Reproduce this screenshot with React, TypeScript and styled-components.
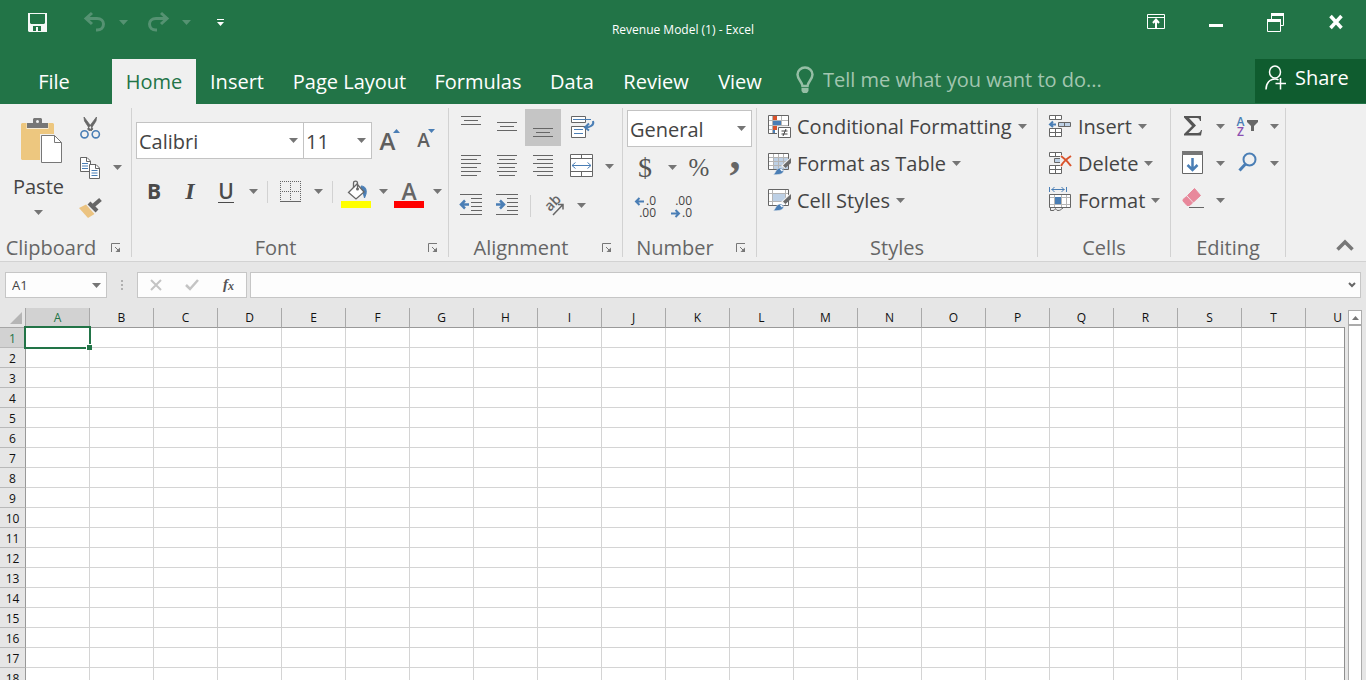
import React from 'react';
import styled, { createGlobalStyle, css } from 'styled-components';

const GREEN = '#227447';
const GRAY = '#666';
const BLUE = '#4a7eb5';
const FONT = '"Open Sans", "Noto Sans", sans-serif';

const GlobalStyle = createGlobalStyle`
  *, *::before, *::after { box-sizing: border-box; }
  body { margin: 0; overflow: hidden; font-family: ${FONT}; background: #e6e6e6; }
  button, input, select { font-family: inherit; font-size: inherit; color: inherit; margin: 0; padding: 0; border: 0; background: none; border-radius: 0; outline: none; }
  button { cursor: pointer; }
  svg { display: block; flex: none; overflow: visible; }
`;

const Window = styled.div`
  display: flex;
  flex-direction: column;
  height: 100vh;
  overflow: hidden;
`;

/* ---------- title bar ---------- */

const TitleBar = styled.header`
  display: grid;
  grid-template-columns: 1fr auto 1fr;
  height: 59px;
  flex: none;
  background: ${GREEN};
  color: #fff;
`;

const QuickAccess = styled.div`
  display: flex;
  gap: 7px;
  height: 44px;
  padding-left: 19px;
`;

const SplitButton = styled.div`
  display: flex;
`;

const DocumentTitle = styled.h1`
  margin: 0;
  font-size: 12px;
  font-weight: 400;
  line-height: 60px;
  white-space: nowrap;
`;

const WindowControls = styled.div`
  display: flex;
  justify-content: flex-end;
  height: 44px;
`;

const TitleButton = styled.button<{ $width: number; $space?: number; $dim?: boolean }>`
  display: flex;
  align-items: center;
  justify-content: center;
  width: ${(p) => p.$width}px;
  margin-right: ${(p) => p.$space ?? 0}px;
  color: ${(p) => (p.$dim ? '#559272' : '#fff')};
`;

/* ---------- tabs ---------- */

const TabBar = styled.nav`
  display: flex;
  height: 45px;
  flex: none;
  background: ${GREEN};
  color: #fff;
  font-size: 20px;
`;

const Tab = styled.button<{ $width: number; $active?: boolean }>`
  width: ${(p) => p.$width}px;
  line-height: 45px;
  white-space: nowrap;
  text-align: center;
  ${(p) =>
    p.$active &&
    css`
      margin-left: 4px;
      background: #f0f0f0;
      color: ${GREEN};
    `}
`;

const TellMe = styled.label`
  display: flex;
  align-items: center;
  flex: 1;
  gap: 8px;
  padding-left: 18px;
  padding-bottom: 4px;
  color: #a2c6b0;

  input {
    flex: 1;
    min-width: 0;
    height: 40px;
  }
  input::placeholder {
    color: #a2c6b0;
    opacity: 1;
  }
`;

const ShareButton = styled.button`
  display: flex;
  align-items: center;
  gap: 8px;
  width: 111px;
  height: 44px;
  padding: 0 0 8px 10px;
  background: #0f5c2f;
  color: #fff;
`;

/* ---------- ribbon ---------- */

const Ribbon = styled.div`
  display: flex;
  height: 158px;
  flex: none;
  padding: 4px 0;
  background: #f0f0f0;
  border-bottom: 1px solid #d2d2d2;
  color: #444;
  font-size: 20px;
`;

const Group = styled.section<{ $width: number }>`
  display: flex;
  flex-direction: column;
  justify-content: space-between;
  flex: none;
  width: ${(p) => p.$width}px;
  border-right: 1px solid #d2d2d2;
`;

const Columns = styled.div`
  display: flex;
`;

const Rows = styled.div<{ $gap: number; $top?: number; $left?: number }>`
  display: flex;
  flex-direction: column;
  gap: ${(p) => p.$gap}px;
  padding-top: ${(p) => p.$top ?? 1}px;
  padding-left: ${(p) => p.$left ?? 4}px;
`;

const Row = styled.div`
  display: flex;
  height: 37px;
`;

const GroupFooter = styled.footer<{ $launcher?: boolean }>`
  display: flex;
  align-items: center;
  gap: 9px;
  padding-right: ${(p) => (p.$launcher ? 10 : 0)}px;
  color: #666;
`;

const GroupTitle = styled.h2`
  flex: 1;
  margin: 0;
  font-size: 20px;
  font-weight: 400;
  line-height: 18px;
  text-align: center;
  white-space: nowrap;
`;

const ToolButton = styled.button<{ $on?: boolean; $space?: number }>`
  display: flex;
  align-items: center;
  justify-content: center;
  width: 36px;
  height: 37px;
  flex: none;
  margin-left: ${(p) => p.$space ?? 0}px;
  background: ${(p) => (p.$on ? '#c5c5c5' : 'none')};
`;

const CaretButton = styled(ToolButton)`
  width: 18px;
`;

const CommandButton = styled.button`
  display: flex;
  align-items: center;
  gap: 6px;
  height: 37px;
  line-height: 37px;
  white-space: nowrap;
`;

const PasteButton = styled.button`
  display: flex;
  flex-direction: column;
  align-items: center;
  width: 72px;
  padding: 10px 0 0 5px;
  line-height: 46px;
`;

const Divider = styled.span`
  width: 1px;
  height: 22px;
  margin: 8px 5px;
  background: #d2d2d2;
`;

const SelectBox = styled.span<{ $width: number }>`
  display: grid;
  align-items: center;
  width: ${(p) => p.$width}px;
  height: 37px;
  border: 1px solid #c3c3c3;
  background: #fff;

  & + & { border-left: 0; }
  select {
    grid-area: 1 / 1;
    width: 100%;
    height: 35px;
    padding: 1px 0 0 2px;
    appearance: none;
  }
  svg {
    grid-area: 1 / 1;
    justify-self: end;
    margin-right: 5px;
    pointer-events: none;
  }
`;

const CollapseButton = styled.button`
  display: flex;
  align-items: flex-end;
  margin-left: auto;
  padding: 0 12px 6px;
`;

/* ---------- formula bar ---------- */

const FormulaBar = styled.div`
  display: flex;
  align-items: center;
  height: 46px;
  flex: none;
  padding: 0 5px;
  font-size: 13px;
  color: #444;
`;

const Box = styled.div<{ $width?: number }>`
  display: flex;
  align-items: center;
  ${(p) => (p.$width ? `width: ${p.$width}px;` : 'flex: 1; margin-left: 3px;')}
  height: 26px;
  border: 1px solid #c6c6c6;
  background: #fdfdfd;

  input {
    flex: 1;
    min-width: 0;
    height: 24px;
    padding-left: 6px;
  }
`;

const BoxButton = styled.button<{ $width: number }>`
  display: flex;
  align-items: center;
  justify-content: center;
  width: ${(p) => p.$width}px;
  height: 24px;
`;

const Grip = styled.span`
  display: flex;
  flex-direction: column;
  align-items: center;
  gap: 2px;
  width: 30px;

  i { width: 2px; height: 2px; background: #b0b0b0; }
`;

/* ---------- sheet ---------- */

const SheetArea = styled.main`
  display: flex;
  flex: 1;
  min-height: 0;
`;

const SheetView = styled.div`
  flex: 1;
  min-width: 0;
  overflow: hidden;
`;

const Sheet = styled.table`
  table-layout: fixed;
  width: max-content;
  border-collapse: separate;
  border-spacing: 0;
  font-size: 12px;
  color: #111;
`;

const Corner = styled.td`
  width: 26px;
  height: 20px;
  padding: 0 3px 0 0;
  border-right: 1px solid #a6a6a6;
  border-bottom: 1px solid #a6a6a6;

  svg { margin-left: auto; }
`;

const headerState = css<{ $active?: boolean }>`
  font-weight: 400;
  color: ${(p) => (p.$active ? GREEN : '#111')};
  background: ${(p) => (p.$active ? '#d2d2d2' : '#e6e6e6')};
`;

const ColumnHeader = styled.th<{ $active?: boolean }>`
  width: 64px;
  height: 20px;
  padding: 0;
  line-height: 19px;
  border-right: 1px solid #a9a9a9;
  border-bottom: 1px solid #999;
  ${headerState}
`;

const RowHeader = styled.th<{ $active?: boolean }>`
  width: 26px;
  height: 20px;
  padding: 2px 0 0;
  line-height: 17px;
  border-right: 1px solid #999;
  border-bottom: 1px solid #b9b9b9;
  ${headerState}
`;

const Cell = styled.td<{ $selected?: boolean }>`
  height: 20px;
  padding: 0;
  background: #fff;
  border-right: 1px solid #d4d4d4;
  border-bottom: 1px solid #d4d4d4;
  ${(p) =>
    p.$selected &&
    css`
      position: relative;

      &::before {
        content: '';
        position: absolute;
        inset: -2px;
        border: 2px solid ${GREEN};
      }
      &::after {
        content: '';
        position: absolute;
        right: -3px;
        bottom: -3px;
        width: 6px;
        height: 6px;
        background: ${GREEN};
        border: 1px solid #fff;
        border-right: 0;
        border-bottom: 0;
      }
    `}
`;

const ScrollTrack = styled.div`
  display: flex;
  flex-direction: column;
  width: 21px;
  flex: none;
  padding: 2px 4px 0 3px;
`;

const SheetEdge = styled.span`
  width: 1px;
  flex: none;
  margin-top: 19px;
  background: #8f8f8f;
`;

const ScrollUp = styled.button`
  display: flex;
  align-items: center;
  justify-content: center;
  height: 15px;
  border: 1px solid #ababab;
  background: #fff;
`;

const ScrollThumb = styled.div`
  flex: 1;
  border: 1px solid #ababab;
  border-bottom: 0;
  background: #fff;
`;

/* ---------- icons ---------- */

type IconProps = { w: number; h: number; children: React.ReactNode };

const Icon = ({ w, h, children }: IconProps) => (
  <svg width={w} height={h} viewBox={`0 0 ${w} ${h}`} fill="none" stroke={GRAY} aria-hidden="true">
    {children}
  </svg>
);

const Caret = ({ color = '#757575' }: { color?: string }) => (
  <Icon w={9} h={5}>
    <path d="M0 0H9L4.5 5Z" fill={color} stroke="none" />
  </Icon>
);

const SaveIcon = () => (
  <Icon w={19} h={19}>
    <path d="M0 0H19V19H1L0 18Z" fill="#f5f8f6" stroke="none" />
    <path d="M2 1H17V10L16 11H3L2 10ZM5 13H13V18H10V14H8V18H5Z" fill={GREEN} stroke="none" />
  </Icon>
);

const UndoIcon = ({ flip }: { flip?: boolean }) => (
  <Icon w={22} h={20}>
    <g transform={flip ? 'translate(22 0) scale(-1 1)' : undefined} stroke="currentColor" strokeWidth="3">
      <path d="M8 1L2 6.500L8 12" />
      <path d="M2 6.500H13C17 6.500 19.500 9 19.500 12C19.500 15.500 17 18 13 18H12" />
    </g>
  </Icon>
);

const CustomizeIcon = () => (
  <Icon w={7} h={7}>
    <path d="M0 .5H7" stroke="#fff" />
    <path d="M0 3H7L3.5 7Z" fill="#fff" stroke="none" />
  </Icon>
);

const RibbonOptionsIcon = () => (
  <Icon w={18} h={16}>
    <path d="M.5 .5H17.5V14.5H.5ZM.5 3.5H17.5" stroke="#fff" />
    <path d="M9 14V6M6 9L9 5.500L12 9" stroke="#fff" strokeWidth="2" />
  </Icon>
);

const MinimizeIcon = () => (
  <Icon w={14} h={10}>
    <path d="M0 8.500H14" stroke="#fff" strokeWidth="3" />
  </Icon>
);

const RestoreIcon = () => (
  <Icon w={18} h={19}>
    <path d="M4 1.500H17" stroke="#fff" strokeWidth="3" />
    <path d="M4.500 6V1M16.500 1V12.500H13.500" stroke="#fff" />
    <path d="M.5 7V18.500H13.500V7" stroke="#fff" />
    <path d="M0 7.500H14" stroke="#fff" strokeWidth="3" />
  </Icon>
);

const CloseIcon = () => (
  <Icon w={14} h={14}>
    <path d="M1.500 1L12.500 13M12.500 1L1.500 13" stroke="#fff" strokeWidth="3.500" />
  </Icon>
);

const BulbIcon = () => (
  <Icon w={20} h={28}>
    <path d="M7.500 20C7.500 16 2.500 13.500 2.500 8.500A7.500 7 0 0 1 17.500 8.500C17.500 13.500 12.500 16 12.500 20Z" stroke="#95bea5" strokeWidth="2.500" />
    <path d="M6.500 22H13.500V25L12 27H8L6.500 25Z" fill="#95bea5" stroke="none" />
  </Icon>
);

const ShareIcon = () => (
  <Icon w={22} h={25}>
    <g stroke="#fff" strokeWidth="1.500">
      <ellipse cx="10" cy="7" rx="5.500" ry="6" />
      <path d="M1 24.500C1 18 5 14 10 14C11.500 14 12.500 14.200 13.500 15" />
      <path d="M10.500 18.500H21M15.500 13V24.500" />
    </g>
  </Icon>
);

const PasteIcon = () => (
  <Icon w={48} h={46}>
    <g transform="translate(6 0)">
      <path d="M1 5H32L33 6V41L32 42H1L0 41V6Z" fill="#edc77f" stroke="none" />
      <path d="M5.500 5H27.500V11H5.500Z" fill="#f7ecd6" stroke="none" />
      <path d="M6 5H12V1L13 0H20L21 1V5H27V10H6Z" fill="#777" stroke="none" />
      <circle cx="16.500" cy="3.500" r="1.500" fill="#f0f0f0" stroke="none" />
      <path d="M19 16H34L42 24V46H19Z" fill="#f0f0f0" stroke="none" />
      <path d="M20.500 17.500H33.500L40.500 24.500V44.500H20.500Z" fill="#fff" stroke="#777" />
      <path d="M33.500 17.500V24.500H40.500" stroke="#777" />
    </g>
  </Icon>
);

const CutIcon = () => (
  <Icon w={20} h={22}>
    <path d="M4 0L4.500 4L11 14L13 12Z M16.500 0L16 4L9.500 14L7.500 12Z" fill="#666" stroke="#666" strokeWidth=".8" />
    <circle cx="4.500" cy="17.300" r="3.600" stroke={BLUE} strokeWidth="1.600" />
    <circle cx="15.800" cy="17.300" r="3.600" stroke={BLUE} strokeWidth="1.600" />
  </Icon>
);

const CopyIcon = () => (
  <Icon w={20} h={22}>
    <path d="M.5 .5H7L10.500 4V14.500H.5Z" fill="#fff" />
    <path d="M6.500 .5V4.500H10.500" />
    <path d="M2 6.500H8M2 9H8M2 11.500H8" stroke={BLUE} />
    <path d="M9.500 7.500H16L19.500 11V21.500H9.500Z" fill="#fff" />
    <path d="M15.500 7.500V11.500H19.500" />
    <path d="M11.500 13.500H17.500M11.500 16H17.500M11.500 18.500H17.500" stroke={BLUE} />
  </Icon>
);

const PainterIcon = () => (
  <Icon w={22} h={20}>
    <path d="M0 10L7 6.500L15.500 16L9 20Z" fill="#ebc381" stroke="none" />
    <path d="M10 5L18 13" strokeWidth="4" />
    <path d="M14.500 7.500L21.500 1.500" strokeWidth="4" />
  </Icon>
);

const SizeLetter = styled.span<{ $size: number }>`
  display: flex;
  align-items: baseline;
  font-size: ${(p) => p.$size}px;
  font-weight: 600;
  line-height: 37px;
  color: #5f5f5f;

  svg { align-self: flex-start; margin: 7px 0 0 -2px; }
`;

const GlyphA = ({ size, up }: { size: number; up?: boolean }) => (
  <SizeLetter $size={size}>
    A
    <Icon w={7} h={4}>
      <path d={up ? 'M0 4H7L3.500 0Z' : 'M0 0H7L3.500 4Z'} fill={BLUE} stroke="none" />
    </Icon>
  </SizeLetter>
);

const Letter = styled.span<{ $kind: 'bold' | 'italic' | 'underline' }>`
  font-size: 21px;
  font-weight: 700;
  line-height: 21px;
  color: #4a4a4a;
  ${(p) => p.$kind === 'italic' && 'font-family: "Liberation Serif", serif; font-style: italic; font-size: 24px;'}
  ${(p) => p.$kind === 'underline' && 'font-weight: 600; border-bottom: 1px solid #4a4a4a;'}
`;

const BordersIcon = () => (
  <Icon w={22} h={21}>
    <path d="M0 .5H21M0 10.500H21M.5 0V20M10.500 0V20M20.500 0V20" strokeDasharray="1 1" />
    <path d="M0 20.500H21" />
  </Icon>
);

const FillColorIcon = () => (
  <Icon w={30} h={33}>
    <path d="M20 11C24 11 26 14 25 19L23.500 23L22 17Z" fill={BLUE} stroke={BLUE} />
    <path d="M16 9L23 17L15 24L7.500 17.500Z" fill="#fff" strokeWidth="1.300" />
    <path d="M12.500 13V8C12.500 5.500 16.500 5.500 16.500 8V14" strokeWidth="1.300" />
    <circle cx="16.500" cy="14" r="1.500" fill={GRAY} stroke="none" />
    <path d="M0 26H30V33H0Z" fill="#ff0" stroke="none" />
  </Icon>
);

const FontColorIcon = () => (
  <Icon w={32} h={33}>
    <text x="15" y="25" textAnchor="middle" fontSize="23" fontWeight="600" fill={GRAY} stroke="none">A</text>
    <path d="M0 26H30V33H0Z" fill="#f00" stroke="none" />
  </Icon>
);

const ValignIcon = ({ top }: { top: number }) => (
  <Icon w={20} h={23}>
    <path d={`M0 ${top + 0.5}H20M3 ${top + 4.5}H17M0 ${top + 8.5}H20`} />
  </Icon>
);

const AlignIcon = ({ inset }: { inset: number }) => (
  <Icon w={20} h={23}>
    <path d="M0 .5H20M0 8.500H20M0 16.500H20" />
    <path d="M0 4.500H16M0 12.500H16M0 20.500H16" transform={`translate(${inset} 0)`} />
  </Icon>
);

const IndentIcon = ({ flip }: { flip?: boolean }) => (
  <Icon w={22} h={23}>
    <path d="M0 .5H22M11 4.500H22M11 8.500H22M11 12.500H22M11 16.500H22M0 20.500H22" />
    <g transform={flip ? 'translate(9 0) scale(-1 1)' : undefined} stroke={BLUE} strokeWidth="2.500">
      <path d="M1 10.500H9M5 6.500L1 10.500L5 14.500" />
    </g>
  </Icon>
);

const WrapIcon = () => (
  <Icon w={23} h={23}>
    <path d="M.5 .5H14.500V6.500H.5ZM.5 10.500H14.500V21.500H.5Z" fill="#fff" />
    <path d="M2 3.500H20M3 13.500H12M3 17.500H12" stroke={BLUE} />
    <path d="M22 5C23.500 9 19 11.500 14 11.500M18 7.500L14 11.500L18 14.500" stroke={BLUE} strokeWidth="2" />
  </Icon>
);

const MergeIcon = () => (
  <Icon w={25} h={25}>
    <path d="M.5 .5H22.500V22.500H.5ZM.5 4.500H22.500M.5 17.500H22.500M11.500 .5V4.500M11.500 17.500V22.500" fill="#fff" />
    <path d="M2 11.500H21M5.500 8.500L2 11.500L5.500 14.500M17.500 8.500L21 11.500L17.500 14.500" stroke={BLUE} />
  </Icon>
);

const OrientationIcon = () => (
  <Icon w={20} h={20}>
    <text transform="translate(6 16) rotate(-45)" fontSize="14" fontWeight="600" fill={GRAY} stroke="none">ab</text>
    <path d="M9 19L18.500 9M14 8.500H19V13.500" strokeWidth="1.500" />
  </Icon>
);

const SymbolText = styled.span<{ $size: number }>`
  font-family: "Liberation Serif", serif;
  font-size: ${(p) => p.$size}px;
  line-height: 37px;
  color: #555;
`;

const CommaText = styled(SymbolText)`
  height: 37px;
  font-weight: 700;
  line-height: 12px;
  color: #666;
`;

const DecimalStack = styled.span`
  display: flex;
  flex-direction: column;
  width: 24px;
  margin-right: 2px;
  font-size: 12px;
  line-height: 12px;
  color: #444;
`;

const DecimalLine = styled.span`
  display: flex;
  align-items: center;
  justify-content: flex-end;
  gap: 1px;
`;

const DecimalArrow = ({ right }: { right?: boolean }) => (
  <Icon w={10} h={8}>
    <path d={right ? 'M0 4.500H8M4.500 1L8 4.500L4.500 8' : 'M9 4.500H1M4.500 1L1 4.500L4.500 8'} stroke={BLUE} strokeWidth="2" />
  </Icon>
);

const DecimalIcon = ({ less }: { less?: boolean }) => (
  <DecimalStack>
    <DecimalLine>{!less && <DecimalArrow />}{less ? '.00' : '.0'}</DecimalLine>
    <DecimalLine>{less && <DecimalArrow right />}{less ? '.0' : '.00'}</DecimalLine>
  </DecimalStack>
);

const ConditionalIcon = () => (
  <Icon w={23} h={23}>
    <path d="M.5 .5H20.500V18.500H.5Z" fill="#fff" />
    <path d="M1 5.500H20M1 10.500H20M1 14.500H20M4.500 1V18M13.500 1V18" stroke="#b5b5b5" />
    <path d="M5 1H9V5H5ZM5 11H9V15H5Z" fill="#d9532c" stroke="none" />
    <path d="M5 6H13V10H5ZM5 15H7V18H5Z" fill={BLUE} stroke="none" />
    <path d="M9 11H23V23H9Z" fill="#f0f0f0" stroke="none" />
    <path d="M10.500 12.500H22.500V22.500H10.500Z" fill="#fff" />
    <path d="M13.500 16H19.500M13.500 19H19.500M18 14L15 21" stroke="#444" />
  </Icon>
);

const Brush = () => (
  <>
    <path d="M22.500 4L23 9L17 15.500L13 13Z" fill="#f0f0f0" stroke="none" />
    <path d="M23 5V10L17.500 15L15 12.500Z" fill="#6b6b6b" stroke="none" />
    <path d="M5 21.500C8 20.500 7.500 15.500 12 15C15 15 16.500 17.500 15 19.500C13.500 21.500 9 22 5 21.500Z" fill={BLUE} stroke="#f0f0f0" strokeWidth=".5" />
    <path d="M12.500 16L14.500 18" stroke="#fff" strokeWidth="1.500" />
  </>
);

const TableIcon = () => (
  <Icon w={23} h={22}>
    <path d="M.5 .5H20.500V16.500H.5Z" fill="#fff" />
    <path d="M6 5H20V16H6Z" fill="#bdd0e5" stroke="none" />
    <path d="M1 4.500H20M1 8.500H20M1 12.500H20M5.500 1V16M10.500 1V16M15.500 1V16" stroke="#b5b5b5" />
    <Brush />
  </Icon>
);

const CellStylesIcon = () => (
  <Icon w={23} h={24}>
    <path d="M.5 .5H20.500V16.500H.5Z" fill="#fff" />
    <path d="M1 4.500H20M1 12.500H20M4.500 1V16M17.500 1V16" stroke="#b5b5b5" />
    <path d="M5 5H17V12H5Z" fill="#bdd0e5" stroke="none" />
    <Brush />
  </Icon>
);

const CellStack = () => (
  <path d="M.5 .5H12.500V4.500H.5ZM6.500 .5V4.500M.5 13.500H12.500V21.500H.5ZM6.500 13.500V21.500M.5 17.500H12.500" fill="#fff" />
);

const InsertIcon = () => (
  <Icon w={23} h={23}>
    <CellStack />
    <path d="M9.500 7.500H21.500V11.500H9.500ZM15.500 7.500V11.500" fill="#bdd0e5" />
    <path d="M1 9.500H7M4 6.500L1 9.500L4 12" stroke={BLUE} strokeWidth="2" />
  </Icon>
);

const DeleteIcon = () => (
  <Icon w={23} h={23}>
    <CellStack />
    <path d="M5.500 6.500H12.500V10.500H5.500Z" fill="#bdd0e5" />
    <path d="M11 3H23V15H11Z" fill="#f0f0f0" stroke="none" />
    <path d="M12 4C15 6 19 10 22 14M22 4C19 6 14 10 12 14" stroke="#d9532c" strokeWidth="2" />
  </Icon>
);

const FormatIcon = () => (
  <Icon w={23} h={28}>
    <path d="M.5 0V5M17.500 0V5M2.500 2.500H15.500M5.500 0L3 2.500L5.500 5M12.500 0L15 2.500L12.500 5" stroke={BLUE} />
    <path d="M.5 7.500H21.500V20.500H.5Z" fill="#fff" />
    <path d="M1 10.500H21M1 17.500H21M5.500 8V20M12.500 8V20M17.500 8V20" stroke="#b5b5b5" />
    <path d="M6 10H12V17H6Z" fill={BLUE} stroke="none" />
    <path d="M1.500 20V23.500H4C6 23.500 6 21.500 6.500 21.500C7 21.500 7 23.500 9 23.500C12 23.500 12 22 14 21" />
  </Icon>
);

const SigmaIcon = () => (
  <Icon w={18} h={22}>
    <path d="M0 0H17V5H16C15.500 3 15 2 13 2H5L12 9.500L4.500 17H13.500C15.500 17 16.500 16 17 14H18L17 19.500H0V18L8 10L0 1.500Z" fill="#555" stroke="none" />
  </Icon>
);

const SortIconBox = styled.span`
  display: flex;
  align-items: center;
  gap: 2px;
`;

const SortLetters = styled.span`
  display: flex;
  flex-direction: column;
  align-items: center;
  width: 9px;
  font-size: 12px;
  font-weight: 600;
  line-height: 10px;
  color: ${BLUE};

  span + span { color: #8a4fb0; }
`;

const SortIcon = () => (
  <SortIconBox>
    <SortLetters><span>A</span><span>Z</span></SortLetters>
    <Icon w={11} h={14}>
      <path d="M0 0H11V2L7 6V11H4V6L0 2Z" fill={GRAY} stroke="none" />
    </Icon>
  </SortIconBox>
);

const FillDownIcon = () => (
  <Icon w={22} h={25}>
    <path d="M.5 .5H20.500V22.500H.5Z" fill="#fff" />
    <path d="M0 0H21V4H0Z" fill="#777" stroke="none" />
    <path d="M10.500 7V19M5.500 14L10.500 19L15.500 14" stroke={BLUE} strokeWidth="2.500" />
  </Icon>
);

const FindIcon = () => (
  <Icon w={19} h={23}>
    <circle cx="11.500" cy="7.500" r="6" stroke={BLUE} strokeWidth="2" />
    <path d="M7.500 12L1.500 18.500" stroke={BLUE} strokeWidth="3" />
  </Icon>
);

const EraserIcon = () => (
  <Icon w={22} h={25}>
    <path d="M12.500 .5L18.500 7.500L11.500 14L5.500 7.500Z" fill="#e8889b" stroke="#e8889b" strokeLinejoin="round" />
    <path d="M4.500 8.500L10.500 15L7.500 17.500H5L1 13V11.500Z" fill="#e8889b" stroke="#e8889b" strokeLinejoin="round" />
    <path d="M7 19.500H22" />
  </Icon>
);

const LauncherIcon = () => (
  <Icon w={10} h={10}>
    <path d="M.5 9V.5H9M4 4L8 8" stroke="#777" />
    <path d="M9 4.500V9H4.500Z" fill="#777" stroke="none" />
  </Icon>
);

const CollapseIcon = () => (
  <Icon w={18} h={12}>
    <path d="M1.500 10.500L9 3L16.500 10.500" stroke="#777" strokeWidth="3.500" />
  </Icon>
);

/* ---------- pieces ---------- */

const Tool = ({ label, on, space, children }: { label: string; on?: boolean; space?: number; children: React.ReactNode }) => (
  <ToolButton aria-label={label} $on={on} $space={space}>{children}</ToolButton>
);

const More = ({ label }: { label: string }) => (
  <CaretButton aria-label={`${label} options`}><Caret /></CaretButton>
);

const Command = ({ icon, label }: { icon: React.ReactNode; label: string }) => (
  <CommandButton>
    {icon}
    <span>{label}</span>
    <Caret />
  </CommandButton>
);

const Footer = ({ title, launcher }: { title: string; launcher?: boolean }) => (
  <GroupFooter $launcher={launcher}>
    <GroupTitle>{title}</GroupTitle>
    {launcher && (
      <button aria-label={`${title} settings`}><LauncherIcon /></button>
    )}
  </GroupFooter>
);

const Choice = ({ label, value, width }: { label: string; value: string; width: number }) => (
  <SelectBox $width={width}>
    <select aria-label={label} defaultValue={value}><option>{value}</option></select>
    <Caret />
  </SelectBox>
);

const TABS = [
  { name: 'File', width: 108 },
  { name: 'Home', width: 84, active: true },
  { name: 'Insert', width: 82 },
  { name: 'Page Layout', width: 143 },
  { name: 'Formulas', width: 114 },
  { name: 'Data', width: 74 },
  { name: 'Review', width: 94 },
  { name: 'View', width: 74 },
];

const COLUMNS = Array.from({ length: 26 }, (_, i) => String.fromCharCode(65 + i));
const ROWS = Array.from({ length: 40 }, (_, i) => i + 1);

export default function App() {
  return (
    <Window>
      <GlobalStyle />
      <TitleBar>
        <QuickAccess>
          <TitleButton $width={36} $space={15} aria-label="Save"><SaveIcon /></TitleButton>
          <SplitButton>
            <TitleButton $width={36} $dim aria-label="Undo"><UndoIcon /></TitleButton>
            <TitleButton $width={20} aria-label="Undo history"><Caret color="#559272" /></TitleButton>
          </SplitButton>
          <SplitButton>
            <TitleButton $width={36} $dim aria-label="Redo"><UndoIcon flip /></TitleButton>
            <TitleButton $width={20} aria-label="Redo history"><Caret color="#559272" /></TitleButton>
          </SplitButton>
          <TitleButton $width={34} aria-label="Customize toolbar"><CustomizeIcon /></TitleButton>
        </QuickAccess>
        <DocumentTitle>Revenue Model (1) - Excel</DocumentTitle>
        <WindowControls>
          <TitleButton $width={60} aria-label="Ribbon display options"><RibbonOptionsIcon /></TitleButton>
          <TitleButton $width={60} aria-label="Minimize"><MinimizeIcon /></TitleButton>
          <TitleButton $width={60} aria-label="Restore"><RestoreIcon /></TitleButton>
          <TitleButton $width={60} aria-label="Close"><CloseIcon /></TitleButton>
        </WindowControls>
      </TitleBar>

      <TabBar>
        {TABS.map((t) => (
          <Tab key={t.name} $width={t.width} $active={t.active}>{t.name}</Tab>
        ))}
        <TellMe>
          <BulbIcon />
          <input aria-label="Tell me what you want to do" placeholder="Tell me what you want to do..." />
        </TellMe>
        <ShareButton><ShareIcon />Share</ShareButton>
      </TabBar>

      <Ribbon>
        <Group $width={132}>
          <Columns>
            <PasteButton>
              <PasteIcon />
              <span>Paste</span>
              <Caret />
            </PasteButton>
            <Rows $gap={3} $left={0}>
              <Row><Tool label="Cut"><CutIcon /></Tool></Row>
              <Row><Tool label="Copy"><CopyIcon /></Tool><More label="Copy" /></Row>
              <Row><Tool label="Format painter"><PainterIcon /></Tool></Row>
            </Rows>
          </Columns>
          <Footer title="Clipboard" launcher />
        </Group>

        <Group $width={317}>
          <Rows $gap={14} $top={14}>
            <Row>
              <Choice label="Font name" value="Calibri" width={168} />
              <Choice label="Font size" value="11" width={68} />
              <Tool label="Increase font size"><GlyphA size={24} up /></Tool>
              <Tool label="Decrease font size"><GlyphA size={19} /></Tool>
            </Row>
            <Row>
              <Tool label="Bold"><Letter $kind="bold">B</Letter></Tool>
              <Tool label="Italic"><Letter $kind="italic">I</Letter></Tool>
              <Tool label="Underline"><Letter $kind="underline">U</Letter></Tool>
              <More label="Underline" />
              <Divider />
              <Tool label="Borders"><BordersIcon /></Tool>
              <More label="Borders" />
              <Divider />
              <Tool label="Fill color"><FillColorIcon /></Tool>
              <More label="Fill color" />
              <Tool label="Font color"><FontColorIcon /></Tool>
              <More label="Font color" />
            </Row>
          </Rows>
          <Footer title="Font" launcher />
        </Group>

        <Group $width={174}>
          <Rows $gap={2}>
            <Row>
              <Tool label="Top align"><ValignIcon top={0} /></Tool>
              <Tool label="Middle align"><ValignIcon top={6} /></Tool>
              <Tool label="Bottom align" on><ValignIcon top={12} /></Tool>
              <Tool label="Wrap text" space={3}><WrapIcon /></Tool>
            </Row>
            <Row>
              <Tool label="Align left"><AlignIcon inset={0} /></Tool>
              <Tool label="Center"><AlignIcon inset={2} /></Tool>
              <Tool label="Align right"><AlignIcon inset={4} /></Tool>
              <Tool label="Merge and center" space={3}><MergeIcon /></Tool>
              <More label="Merge" />
            </Row>
            <Row>
              <Tool label="Decrease indent"><IndentIcon /></Tool>
              <Tool label="Increase indent"><IndentIcon flip /></Tool>
              <Divider />
              <Tool label="Orientation"><OrientationIcon /></Tool>
              <More label="Orientation" />
            </Row>
          </Rows>
          <Footer title="Alignment" launcher />
        </Group>

        <Group $width={134}>
          <Rows $gap={2} $top={2}>
            <Row><Choice label="Number format" value="General" width={125} /></Row>
            <Row>
              <Tool label="Currency"><SymbolText $size={28}>$</SymbolText></Tool>
              <More label="Currency" />
              <Tool label="Percent"><SymbolText $size={25}>%</SymbolText></Tool>
              <Tool label="Comma style"><CommaText $size={44}>,</CommaText></Tool>
            </Row>
            <Row>
              <Tool label="Increase decimal"><DecimalIcon /></Tool>
              <Tool label="Decrease decimal"><DecimalIcon less /></Tool>
            </Row>
          </Rows>
          <Footer title="Number" launcher />
        </Group>

        <Group $width={281}>
          <Rows $gap={0} $top={0} $left={11}>
            <Command icon={<ConditionalIcon />} label="Conditional Formatting" />
            <Command icon={<TableIcon />} label="Format as Table" />
            <Command icon={<CellStylesIcon />} label="Cell Styles" />
          </Rows>
          <Footer title="Styles" />
        </Group>

        <Group $width={133}>
          <Rows $gap={0} $top={0} $left={11}>
            <Command icon={<InsertIcon />} label="Insert" />
            <Command icon={<DeleteIcon />} label="Delete" />
            <Command icon={<FormatIcon />} label="Format" />
          </Rows>
          <Footer title="Cells" />
        </Group>

        <Group $width={115}>
          <Rows $gap={0} $top={0}>
            <Row>
              <Tool label="AutoSum"><SigmaIcon /></Tool>
              <More label="AutoSum" />
              <Tool label="Sort and filter"><SortIcon /></Tool>
              <More label="Sort and filter" />
            </Row>
            <Row>
              <Tool label="Fill"><FillDownIcon /></Tool>
              <More label="Fill" />
              <Tool label="Find"><FindIcon /></Tool>
              <More label="Find" />
            </Row>
            <Row>
              <Tool label="Clear"><EraserIcon /></Tool>
              <More label="Clear" />
            </Row>
          </Rows>
          <Footer title="Editing" />
        </Group>

        <CollapseButton aria-label="Collapse ribbon"><CollapseIcon /></CollapseButton>
      </Ribbon>

      <FormulaBar>
        <Box $width={102}>
          <input aria-label="Name box" defaultValue="A1" />
          <BoxButton $width={20} aria-label="Names"><Caret /></BoxButton>
        </Box>
        <Grip><i /><i /><i /></Grip>
        <Box $width={110}>
          <BoxButton $width={36} aria-label="Cancel">
            <Icon w={12} h={12}><path d="M1 1L11 11M11 1L1 11" stroke="#c4c4c4" strokeWidth="2" /></Icon>
          </BoxButton>
          <BoxButton $width={36} aria-label="Enter">
            <Icon w={14} h={12}><path d="M1 6L5 10L13 1" stroke="#c4c4c4" strokeWidth="2.500" /></Icon>
          </BoxButton>
          <BoxButton $width={36} aria-label="Insert function">
            <Icon w={14} h={16}>
              <g fontFamily="Liberation Serif" fontStyle="italic" fontWeight="700" fill="#555" stroke="none">
                <text x="2" y="12" fontSize="15">f</text>
                <text x="7" y="13" fontSize="12">x</text>
              </g>
            </Icon>
          </BoxButton>
        </Box>
        <Box>
          <input aria-label="Formula" />
          <BoxButton $width={16} aria-label="Expand formula bar">
            <Icon w={8} h={6}><path d="M1 1L4 4L7 1" stroke="#666" strokeWidth="2" /></Icon>
          </BoxButton>
        </Box>
      </FormulaBar>

      <SheetArea>
        <SheetView>
          <Sheet>
            <thead>
              <tr>
                <Corner>
                  <Icon w={12} h={12}><path d="M12 0V12H0Z" fill="#b5b5b5" stroke="none" /></Icon>
                </Corner>
                {COLUMNS.map((c, i) => (
                  <ColumnHeader key={c} scope="col" $active={i === 0}>{c}</ColumnHeader>
                ))}
              </tr>
            </thead>
            <tbody>
              {ROWS.map((r) => (
                <tr key={r}>
                  <RowHeader scope="row" $active={r === 1}>{r}</RowHeader>
                  {COLUMNS.map((c, i) => (
                    <Cell key={c} $selected={r === 1 && i === 0} />
                  ))}
                </tr>
              ))}
            </tbody>
          </Sheet>
        </SheetView>
        <SheetEdge />
        <ScrollTrack>
          <ScrollUp aria-label="Scroll up">
            <Icon w={7} h={4}><path d="M0 4H7L3.500 0Z" fill="#777" stroke="none" /></Icon>
          </ScrollUp>
          <ScrollThumb />
        </ScrollTrack>
      </SheetArea>
    </Window>
  );
}
